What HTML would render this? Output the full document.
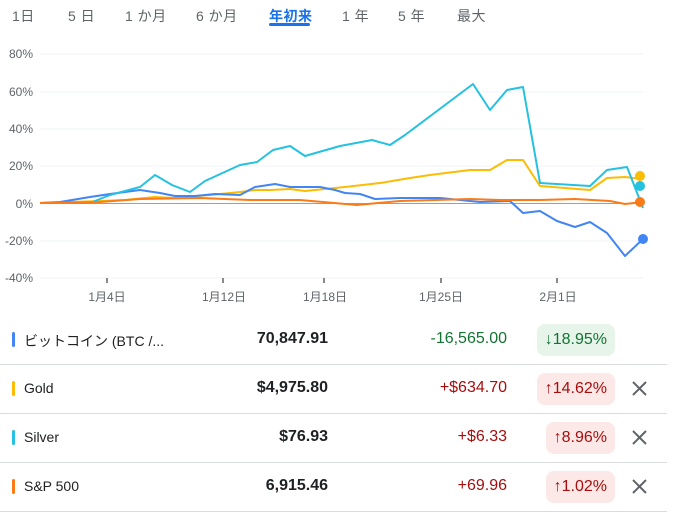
<!DOCTYPE html>
<html><head><meta charset="utf-8"><style>
body{margin:0;width:693px;height:516px;background:#fff;font-family:"Liberation Sans","Noto Sans CJK JP",sans-serif;position:relative;overflow:hidden;color:#202124}
.tab{position:absolute;top:6px;font-size:14px;color:#5f6368;letter-spacing:.5px}
.act{color:#1a73e8;font-weight:bold}
.row{position:absolute;left:0;width:667px;height:49px;border-bottom:1px solid #dadce0}
.bar{position:absolute;left:12px;top:17px;width:3px;height:15px;border-radius:2px}
.nm{position:absolute;left:24px;top:16px;font-size:14px}
.pr{position:absolute;right:339px;top:15px;font-size:16px;font-weight:bold}
.ch{position:absolute;right:160px;top:15px;font-size:16px}
.bd{position:absolute;right:52px;top:9px;height:32px;line-height:32px;padding:0 8px;border-radius:8px;font-size:16px}
.up{background:#fce8e6;color:#a50e0e}.upt{color:#a50e0e}
.dn{background:#e6f4ea;color:#137333}.dnt{color:#137333}
.x{position:absolute;left:632px;top:17px}
</style></head><body>
<div class="tab" style="left:12px">1日</div>
<div class="tab" style="left:68px">5 日</div>
<div class="tab" style="left:125px">1 か月</div>
<div class="tab" style="left:196px">6 か月</div>
<div class="tab act" style="left:269px">年初来</div>
<div style="position:absolute;left:269px;top:23px;width:41px;height:3px;background:#1a73e8;border-radius:2px"></div>
<div class="tab" style="left:342px">1 年</div>
<div class="tab" style="left:398px">5 年</div>
<div class="tab" style="left:457px">最大</div>
<svg width="693" height="310" style="position:absolute;left:0;top:0" font-family="Liberation Sans, Noto Sans CJK JP, sans-serif">
<g stroke="#f1f3f4" stroke-width="1">
<line x1="40" x2="643" y1="54" y2="54"/><line x1="40" x2="643" y1="92" y2="92"/><line x1="40" x2="643" y1="129" y2="129"/><line x1="40" x2="643" y1="166" y2="166"/><line x1="40" x2="643" y1="241" y2="241"/><line x1="40" x2="643" y1="278" y2="278"/>
</g>
<line x1="40" x2="643" y1="203.5" y2="203.5" stroke="#9aa0a6" stroke-width="1"/>
<g fill="#5f6368" font-size="12" text-anchor="end">
<text x="33" y="58">80%</text><text x="33" y="96">60%</text><text x="33" y="133">40%</text><text x="33" y="170">20%</text><text x="33" y="208">0%</text><text x="33" y="245">-20%</text><text x="33" y="282">-40%</text>
</g>
<g stroke="#5f6368" stroke-width="1.5"><line x1="107" x2="107" y1="278" y2="283"/><line x1="223" x2="223" y1="278" y2="283"/><line x1="324" x2="324" y1="278" y2="283"/><line x1="441" x2="441" y1="278" y2="283"/><line x1="557" x2="557" y1="278" y2="283"/></g>
<g fill="#5f6368" font-size="12" text-anchor="middle">
<text x="107" y="301">1月4日</text><text x="224" y="301">1月12日</text><text x="325" y="301">1月18日</text><text x="441" y="301">1月25日</text><text x="558" y="301">2月1日</text>
</g>
<g fill="none" stroke-width="2" stroke-linejoin="round">
<polyline stroke="#fbbc04" points="40,203 100,201 125,200 155,197 175,198 210,195 240,192 255,190 270,190 290,189 305,191 325,189 345,187 380,183 410,178 430,175 470,170 490,170 507,160 523,160 540,186 590,190 607,178 625,177 643,179"/>
<polyline stroke="#4285f4" points="40,203 60,202 90,197 110,194 140,190 160,193 175,196 195,196 215,194 240,195 255,187 275,184 290,187 320,187 335,190 345,193 360,194 375,199 400,198 440,198 460,200 480,202 510,201 523,213 540,211 557,221 575,227 590,222 607,233 625,256 643,239"/>
<polyline stroke="#24c1e0" points="40,203 90,203 110,195 140,187 155,175 172,185 190,192 205,181 240,165 257,162 273,150 290,146 305,156 340,146 372,140 390,145 405,135 473,84 490,110 507,90 523,87 540,183 590,186 607,170 627,167 643,208"/>
<polyline stroke="#fa7b17" points="40,203 100,202 140,199 200,198 250,200 300,200 357,205 400,201 470,199 500,200 540,200 575,199 610,201 625,204 643,202"/>
</g>
<circle cx="640" cy="176" r="5" fill="#fbbc04"/>
<circle cx="640" cy="186" r="5" fill="#24c1e0"/>
<circle cx="643" cy="239" r="5" fill="#4285f4"/>
<circle cx="640" cy="202" r="5" fill="#fa7b17"/>
</svg>
<div class="row" style="top:315px"><div class="bar" style="background:#4285f4"></div><div class="nm">ビットコイン (BTC /...</div><div class="pr">70,847.91</div><div class="ch dnt">-16,565.00</div><div class="bd dn">↓18.95%</div></div>
<div class="row" style="top:364px"><div class="bar" style="background:#fbbc04"></div><div class="nm">Gold</div><div class="pr">$4,975.80</div><div class="ch upt">+$634.70</div><div class="bd up">↑14.62%</div><svg class="x" width="15" height="15"><path d="M1 1L14 14M14 1L1 14" stroke="#5f6368" stroke-width="2"/></svg></div>
<div class="row" style="top:413px"><div class="bar" style="background:#24c1e0"></div><div class="nm">Silver</div><div class="pr">$76.93</div><div class="ch upt">+$6.33</div><div class="bd up">↑8.96%</div><svg class="x" width="15" height="15"><path d="M1 1L14 14M14 1L1 14" stroke="#5f6368" stroke-width="2"/></svg></div>
<div class="row" style="top:462px"><div class="bar" style="background:#fa7b17"></div><div class="nm">S&amp;P 500</div><div class="pr">6,915.46</div><div class="ch upt">+69.96</div><div class="bd up">↑1.02%</div><svg class="x" width="15" height="15"><path d="M1 1L14 14M14 1L1 14" stroke="#5f6368" stroke-width="2"/></svg></div>
</body></html>
